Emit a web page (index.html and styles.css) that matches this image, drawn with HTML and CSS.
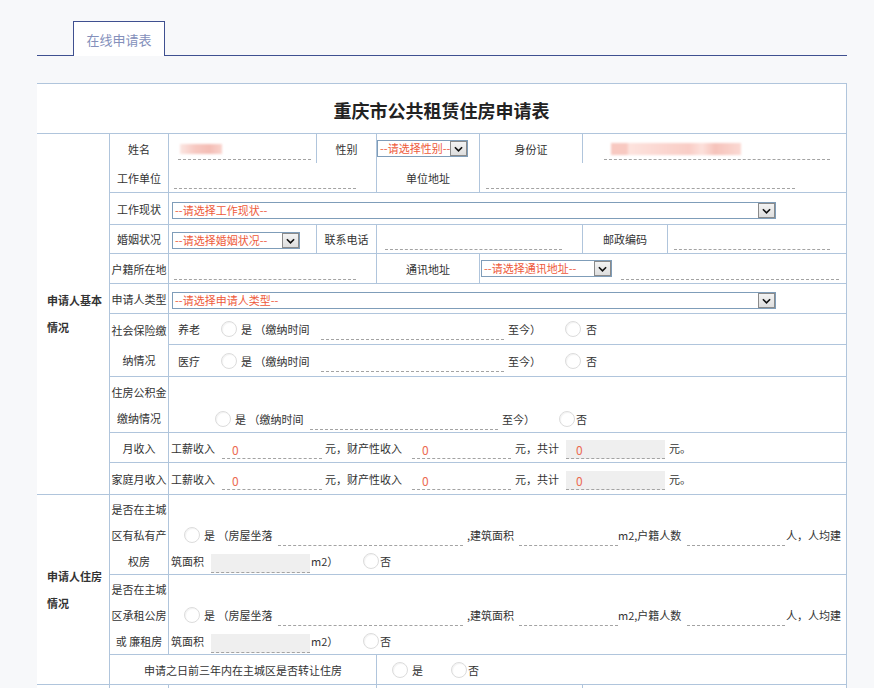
FILE: index.html
```html
<!DOCTYPE html>
<html lang="zh-CN">
<head>
<meta charset="utf-8">
<title>在线申请表</title>
<link rel="stylesheet" href="styles.css">
</head>
<body>
<div class="tabs"><div class="tab">在线申请表</div></div>

<div class="sheet">
  <div class="sheet-title">重庆市公共租赁住房申请表</div>

  <div class="section">
    <div class="sec-name">申请人基本情况</div>
    <div class="rows">

      <div class="row row-a">
        <div class="lbl">姓名</div>
        <div class="c br"><span class="inp i-name"><span class="blur-name"></span></span></div>
        <div class="c br ctr">性别</div>
        <div class="c br"><div class="sel s-sex"><span class="sel-txt">--请选择性别--</span><span class="arr"><svg viewBox="0 0 10 6" width="9" height="6"><polyline points="1,1 5,5 9,1" fill="none" stroke="#111" stroke-width="1.8"/></svg></span></div></div>
        <div class="c br ctr">身份证</div>
        <div class="c"><span class="inp i-id"><span class="blur-id"></span></span></div>
        <div class="lbl">工作单位</div>
        <div class="c br span2"><span class="inp i-work"></span></div>
        <div class="c br ctr">单位地址</div>
        <div class="c span2"><span class="inp i-waddr"></span></div>
      </div>

      <div class="row row-b">
        <div class="lbl">工作现状</div>
        <div class="cnt"><div class="sel s-wide"><span class="sel-txt">--请选择工作现状--</span><span class="arr"><svg viewBox="0 0 10 6" width="9" height="6"><polyline points="1,1 5,5 9,1" fill="none" stroke="#111" stroke-width="1.8"/></svg></span></div></div>
      </div>

      <div class="row row-c">
        <div class="lbl">婚姻状况</div>
        <div class="c br"><div class="sel s-marry"><span class="sel-txt">--请选择婚姻状况--</span><span class="arr"><svg viewBox="0 0 10 6" width="9" height="6"><polyline points="1,1 5,5 9,1" fill="none" stroke="#111" stroke-width="1.8"/></svg></span></div></div>
        <div class="c br ctr">联系电话</div>
        <div class="c br"><span class="inp i-phone"></span></div>
        <div class="c br ctr">邮政编码</div>
        <div class="c"><span class="inp i-zip"></span></div>
      </div>

      <div class="row row-d">
        <div class="lbl">户籍所在地</div>
        <div class="c br"><span class="inp i-work"></span></div>
        <div class="c br ctr">通讯地址</div>
        <div class="c"><div class="sel s-addr"><span class="sel-txt">--请选择通讯地址--</span><span class="arr"><svg viewBox="0 0 10 6" width="9" height="6"><polyline points="1,1 5,5 9,1" fill="none" stroke="#111" stroke-width="1.8"/></svg></span></div><span class="inp i-addr"></span></div>
      </div>

      <div class="row row-e">
        <div class="lbl">申请人类型</div>
        <div class="cnt"><div class="sel s-wide"><span class="sel-txt">--请选择申请人类型--</span><span class="arr"><svg viewBox="0 0 10 6" width="9" height="6"><polyline points="1,1 5,5 9,1" fill="none" stroke="#111" stroke-width="1.8"/></svg></span></div></div>
      </div>

      <div class="row row-f">
        <div class="lbl lh30">社会保险缴纳情况</div>
        <div class="cnt-col">
          <div class="sub">
            <span class="t ml9 w22">养老</span>
            <span class="radio ml21"></span>
            <span class="t ml4 w76">是 （缴纳时间</span>
            <span class="inp ml4 w183"></span>
            <span class="t ml4 w33">至今）</span>
            <span class="radio ml24"></span>
            <span class="t ml5">否</span>
          </div>
          <div class="sub">
            <span class="t ml9 w22">医疗</span>
            <span class="radio ml21"></span>
            <span class="t ml4 w76">是 （缴纳时间</span>
            <span class="inp ml4 w183"></span>
            <span class="t ml4 w33">至今）</span>
            <span class="radio ml24"></span>
            <span class="t ml5">否</span>
          </div>
        </div>
      </div>

      <div class="row row-g">
        <div class="lbl lh26">住房公积金缴纳情况</div>
        <div class="cnt-end">
          <div class="line">
            <span class="radio ml46"></span>
            <span class="t ml4 w71">是 （缴纳时间</span>
            <span class="inp ml4 w188"></span>
            <span class="t ml4 w33">至今）</span>
            <span class="radio ml24"></span>
            <span class="t ml1">否</span>
          </div>
        </div>
      </div>

      <div class="row row-h">
        <div class="lbl">月收入</div>
        <div class="cnt">
          <span class="t ml2 w44">工薪收入</span>
          <span class="inp num ml7 w100">0</span>
          <span class="t ml3 w83">元，财产性收入</span>
          <span class="inp num ml4 w99">0</span>
          <span class="t ml4 w47">元，共计</span>
          <span class="inp num gray ml4 w99">0</span>
          <span class="t ml4">元。</span>
        </div>
      </div>

      <div class="row row-i">
        <div class="lbl">家庭月收入</div>
        <div class="cnt">
          <span class="t ml2 w44">工薪收入</span>
          <span class="inp num ml7 w100">0</span>
          <span class="t ml3 w83">元，财产性收入</span>
          <span class="inp num ml4 w99">0</span>
          <span class="t ml4 w47">元，共计</span>
          <span class="inp num gray ml4 w99">0</span>
          <span class="t ml4">元。</span>
        </div>
      </div>

    </div>
  </div>

  <div class="section">
    <div class="sec-name">申请人住房情况</div>
    <div class="rows">

      <div class="row row-j">
        <div class="lbl lh26">是否在主城区有私有产权房</div>
        <div class="cnt-end">
          <div class="line">
            <span class="radio ml15"></span>
            <span class="t ml4 w70">是 （房屋坐落</span>
            <span class="inp ml4 w185"></span>
            <span class="t ml4 w50">,建筑面积</span>
            <span class="inp ml2 w99"></span>
            <span class="t w66">m2,户籍人数</span>
            <span class="inp ml3 w98"></span>
            <span class="t ml1">人，人均建</span>
          </div>
          <div class="line">
            <span class="t ml2 w36">筑面积</span>
            <span class="inp gray ml4 w99"></span>
            <span class="t ml1 w28">m2）</span>
            <span class="radio ml24"></span>
            <span class="t ml1">否</span>
          </div>
        </div>
      </div>

      <div class="row row-j">
        <div class="lbl lh26">是否在主城区承租公房或 廉租房</div>
        <div class="cnt-end">
          <div class="line">
            <span class="radio ml15"></span>
            <span class="t ml4 w70">是 （房屋坐落</span>
            <span class="inp ml4 w185"></span>
            <span class="t ml4 w50">,建筑面积</span>
            <span class="inp ml2 w99"></span>
            <span class="t w66">m2,户籍人数</span>
            <span class="inp ml3 w98"></span>
            <span class="t ml1">人，人均建</span>
          </div>
          <div class="line">
            <span class="t ml2 w36">筑面积</span>
            <span class="inp gray ml4 w99"></span>
            <span class="t ml1 w28">m2）</span>
            <span class="radio ml24"></span>
            <span class="t ml1">否</span>
          </div>
        </div>
      </div>

      <div class="row row-l">
        <div class="c br ctr">申请之日前三年内在主城区是否转让住房</div>
        <div class="c">
          <span class="radio ml15"></span>
          <span class="t ml4 w11">是</span>
          <span class="radio ml28"></span>
          <span class="t ml1">否</span>
        </div>
      </div>

    </div>
  </div>

  <div class="section">
    <div class="sec-name"></div>
    <div class="rows">
      <div class="row row-n">
        <div class="lbl"></div>
        <div class="c br"></div>
        <div class="c br"></div>
        <div class="c"></div>
      </div>
    </div>
  </div>
</div>
</body>
</html>
```

FILE: styles.css
```css
* { box-sizing: border-box; }

html, body {
  margin: 0;
  padding: 0;
}

body {
  width: 874px;
  height: 688px;
  overflow: hidden;
  background: #f7f8fa;
  font-family: "Noto Sans CJK SC", "Microsoft YaHei", sans-serif;
  font-size: 11px;
  color: #333;
}

/* ---------- tab strip ---------- */
.tabs {
  margin: 21px 27px 0 37px;
  height: 35px;
  padding-left: 36px;
  border-bottom: 1px solid #3f5090;
}

.tab {
  width: 92px;
  height: 35px;
  border: 1px solid #3f5090;
  border-bottom: none;
  background: #fff;
  color: #8490bb;
  font-size: 13px;
  line-height: 36px;
  text-align: center;
}

/* ---------- sheet ---------- */
.sheet {
  margin: 27px 0 0 37px;
  width: 810px;
  background: #fff;
  border-top: 1px solid #b0c5dc;
  border-right: 1px solid #b0c5dc;
}

.sheet-title {
  height: 50px;
  padding-top: 3px;
  line-height: 46px;
  text-align: center;
  font-size: 18px;
  font-weight: bold;
  color: #222;
  border-bottom: 1px solid #b0c5dc;
}

.section {
  display: flex;
  border-bottom: 1px solid #b0c5dc;
}

.sec-name {
  width: 73px;
  flex-shrink: 0;
  padding-left: 10px;
  border-right: 1px solid #b0c5dc;
  display: flex;
  align-items: center;
  font-weight: bold;
  line-height: 27px;
  color: #333;
}

.rows {
  flex: 1;
  min-width: 0;
}

.row {
  display: flex;
  border-bottom: 1px solid #b0c5dc;
}

.rows > .row:last-child {
  border-bottom: none;
}

.lbl {
  width: 59px;
  flex-shrink: 0;
  border-right: 1px solid #b0c5dc;
  display: flex;
  align-items: center;
  justify-content: center;
  text-align: center;
  line-height: 16px;
}

.lh30 { line-height: 30px; }
.lh26 { line-height: 26px; }

.cnt {
  flex: 1;
  display: flex;
  align-items: center;
}

.cnt-col {
  flex: 1;
  display: flex;
  flex-direction: column;
}

.cnt-end {
  flex: 1;
  display: flex;
  flex-direction: column;
  justify-content: flex-end;
}

.line {
  height: 26px;
  display: flex;
  align-items: center;
}

.sub {
  height: 31px;
  display: flex;
  align-items: center;
  border-bottom: 1px solid #b0c5dc;
}

.sub:last-child {
  border-bottom: none;
}

/* grid rows */
.c {
  display: flex;
  align-items: center;
  min-width: 0;
}

.br { border-right: 1px solid #b0c5dc; }
.ctr { justify-content: center; text-align: center; }
.span2 { grid-column: span 2; }

.row-a {
  display: grid;
  grid-template-columns: 59px 148px 60px 103px 103px 1fr;
  grid-template-rows: 29px 29px;
  height: 59px;
}

.row-b { height: 32px; }
.row-b .sel { margin-top: 4px; }

.row-c {
  display: grid;
  grid-template-columns: 59px 148px 60px 206px 85px 1fr;
  height: 29px;
}

.row-d {
  display: grid;
  grid-template-columns: 59px 208px 103px 1fr;
  height: 30px;
}

.row-e { height: 30px; }
.row-e .sel { margin-top: 4px; }
.row-f { height: 63px; }
.row-g { height: 56px; }
.row-h { height: 30px; }
.row-i { height: 31px; }
.row-j { height: 80px; }
.rows > .row-j:nth-child(2) { height: 80px; }

.row-l {
  display: grid;
  grid-template-columns: 267px 1fr;
  height: 29px;
}

.row-n {
  display: grid;
  grid-template-columns: 59px 208px 206px 1fr;
  height: 30px;
}

/* ---------- controls ---------- */
.t {
  flex-shrink: 0;
  white-space: nowrap;
  line-height: 16px;
}

.inp {
  flex-shrink: 0;
  display: flex;
  align-items: center;
  height: 18px;
  margin-top: 4px;
  border-bottom: 1px dashed #a3a3a3;
}

.inp.num {
  color: #ec6a52;
  padding-left: 10px;
  font-size: 12px;
}

.inp.gray {
  background: #efefef;
  height: 19px;
}

.radio {
  flex-shrink: 0;
  width: 16px;
  height: 16px;
  border-radius: 50%;
  border: 1px solid #dcdcdc;
  background: #fff;
  box-shadow: inset 1px 1px 1px rgba(0, 0, 0, 0.05);
}

.sel {
  flex-shrink: 0;
  display: flex;
  align-items: center;
  height: 17px;
  border: 1px solid #7f9db9;
  background: #fff;
  color: #ee5a3b;
  overflow: hidden;
}

.sel-txt {
  flex: 1;
  min-width: 0;
  padding-left: 2px;
  white-space: nowrap;
  overflow: hidden;
  line-height: 15px;
}

.arr {
  flex-shrink: 0;
  width: 17px;
  height: 15px;
  border: 1px solid #8a8a8a;
  background: linear-gradient(#f3f3f3, #dedede);
  display: flex;
  align-items: center;
  justify-content: center;
}

.s-sex { width: 91px; }
.s-wide { width: 604px; margin-left: 3px; }
.s-marry { width: 128px; margin-left: 3px; margin-top: 3px; }
.s-addr { width: 131px; margin-left: 1px; }

.i-name { width: 133px; margin-left: 9px; }
.i-id { width: 226px; margin-left: 21px; }
.i-work { width: 182px; margin-left: 5px; }
.i-waddr { width: 309px; margin-left: 6px; }
.i-phone { width: 177px; margin-left: 8px; }
.i-zip { width: 156px; margin-left: 6px; }
.i-addr { width: 218px; margin-left: 9px; }

.blur-name {
  width: 42px;
  height: 10px;
  margin: -2px 0 0 2px;
  background: linear-gradient(90deg, #fbe6e2 0%, #f7c9c2 35%, #f4bdb5 70%, #f9d3cd 100%);
  filter: blur(1px);
}

.blur-id {
  width: 130px;
  height: 12px;
  margin: -3px 0 0 7px;
  background: linear-gradient(90deg, #f8c9c1 0%, #f8c9c1 12%, #fde3de 14%, #fbd6d0 40%, #f9cdc6 60%, #fde1dc 70%, #f6c3bb 80%, #fbd9d3 100%);
  filter: blur(1px);
}

/* spacing utilities */
.ml1 { margin-left: 1px; }
.ml2 { margin-left: 2px; }
.ml3 { margin-left: 3px; }
.ml4 { margin-left: 4px; }
.ml5 { margin-left: 5px; }
.ml7 { margin-left: 7px; }
.ml9 { margin-left: 9px; }
.ml15 { margin-left: 15px; }
.ml21 { margin-left: 21px; }
.ml24 { margin-left: 24px; }
.ml28 { margin-left: 28px; }
.ml46 { margin-left: 46px; }

.w11 { width: 11px; }
.w22 { width: 22px; }
.w28 { width: 28px; }
.w33 { width: 33px; }
.w36 { width: 36px; }
.w44 { width: 44px; }
.w47 { width: 47px; }
.w50 { width: 50px; }
.w66 { width: 66px; }
.w70 { width: 70px; }
.w71 { width: 71px; }
.w76 { width: 76px; }
.w83 { width: 83px; }
.w98 { width: 98px; }
.w99 { width: 99px; }
.w100 { width: 100px; }
.w183 { width: 183px; }
.w185 { width: 185px; }
.w188 { width: 188px; }
```
